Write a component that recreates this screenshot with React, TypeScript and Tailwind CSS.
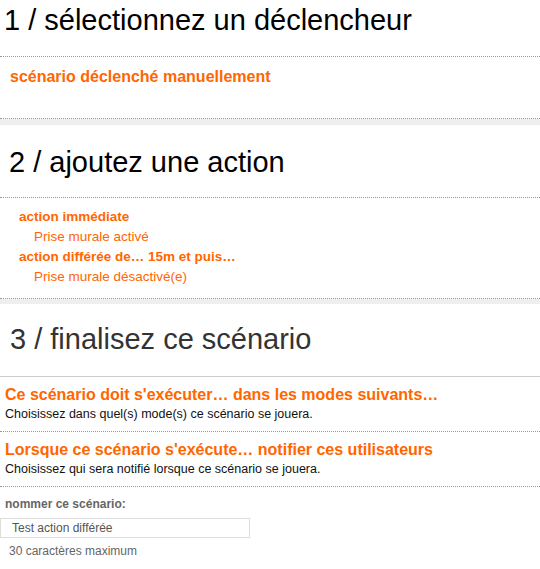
const actions = [
  { label: "action immédiate", detail: "Prise murale activé" },
  { label: "action différée de… 15m et puis…", detail: "Prise murale désactivé(e)" },
]

const finalSteps = [
  {
    title: "Ce scénario doit s'exécuter… dans les modes suivants…",
    hint: "Choisissez dans quel(s) mode(s) ce scénario se jouera.",
  },
  {
    title: "Lorsque ce scénario s'exécute… notifier ces utilisateurs",
    hint: "Choisissez qui sera notifié lorsque ce scénario se jouera.",
  },
]

export default function App() {
  return (
    <div
      className="flex flex-col gap-[5px] bg-[#eeeeee] w-[540px] min-h-[569px]"
      style={{ fontFamily: '"Liberation Sans", Arial, sans-serif' }}
    >
      {/* 1 / trigger */}
      <section className="bg-white">
        <h2 className="pl-[4px] pt-[4px] pb-[19px] text-[29px] leading-[33px] text-black font-normal border-b border-dotted border-[#999]">
          1 / sélectionnez un déclencheur
        </h2>
        <div className="pl-[10px] pt-[11px] pb-[32px] border-b border-dotted border-[#999]">
          <div className="text-[16px] leading-[18px] font-bold text-[#ff6600]">scénario déclenché manuellement</div>
        </div>
      </section>

      {/* 2 / actions */}
      <section className="bg-white mt-[1px]">
        <h2 className="pl-[9px] pt-[21px] pb-[18px] text-[29px] leading-[33px] text-black font-normal border-b border-dotted border-[#999]">
          2 / ajoutez une action
        </h2>
        <div className="pl-[19px] pt-[9px] pb-[11px] border-b border-dotted border-[#999] text-[13.5px] leading-[20px] text-[#ff6600]">
          {actions.map((a, i) => (
            <div key={i}>
              <div className="font-bold">{a.label}</div>
              <div className="pl-[15px]">{a.detail}</div>
            </div>
          ))}
        </div>
      </section>

      {/* 3 / finalize */}
      <section className="bg-white flex-1">
        <h2 className="pl-[10px] pt-[19px] pb-[20px] text-[29px] leading-[33px] text-[#333] font-normal border-b border-[#cccccc]">
          3 / finalisez ce scénario
        </h2>
        {finalSteps.map((s, i) => (
          <div key={i} className="pl-[5px] pt-[8px] pb-[8px] border-b border-dotted border-[#999]">
            <div className="text-[16px] leading-[20px] font-bold text-[#ff6600]">{s.title}</div>
            <div className="text-[12.5px] leading-[18px] text-[#111]">{s.hint}</div>
          </div>
        ))}
        <div className="pt-[9px] pb-[8px]">
          <div className="pl-[5px] text-[12px] leading-[16px] font-bold text-[#666]">nommer ce scénario:</div>
          <input
            readOnly
            defaultValue="Test action différée"
            className="mt-[6px] block w-[250px] h-[20px] border border-[#dddddd] pl-[11px] text-[12px] text-[#555] outline-none"
            style={{ fontFamily: '"Liberation Sans", Arial, sans-serif' }}
          />
          <div className="mt-[5px] pl-[9px] text-[12px] leading-[16px] text-[#666]">30 caractères maximum</div>
        </div>
      </section>
    </div>
  )
}
